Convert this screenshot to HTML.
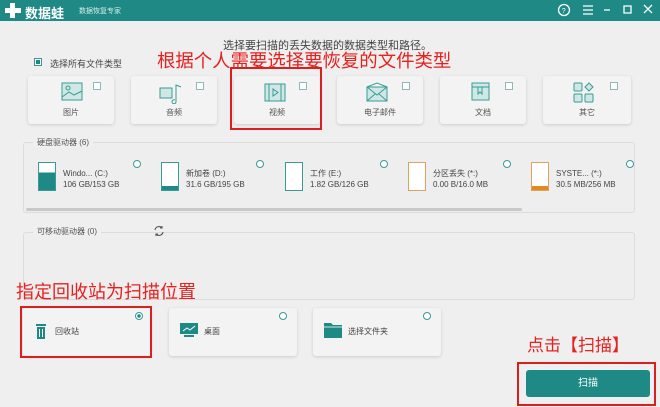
<!DOCTYPE html>
<html><head><meta charset="utf-8"><style>
*{margin:0;padding:0;box-sizing:border-box}
body{width:660px;height:407px;background:#efefef;font-family:"Liberation Sans","Noto Sans CJK SC",sans-serif;position:relative;overflow:hidden;color:#444}
.a{position:absolute}
.bar{left:0;top:0;width:660px;height:21px;background:#1f8a85}
.card{position:absolute;background:#f3f3f3;border-radius:3px;box-shadow:0 1px 3px rgba(0,0,0,.15)}
.cb{position:absolute;width:8px;height:8px;border:1px solid #8fb9b6;background:#fff}
.lbl{position:absolute;font-size:8px;color:#555;width:100%;text-align:center}
.red{color:#e8201f;position:absolute;white-space:nowrap}
.rbox{position:absolute;border:2px solid #d9201f}
.grp{position:absolute;border:1px solid #dcdcdc;border-radius:3px;background:#eeeeee}
.gl{position:absolute;font-size:8px;color:#555;background:#efefef;padding:0 4px}
.drv{position:absolute;top:162px}
.di{position:absolute;width:18px;height:29px;border:1px solid #3a9b95;background:#fff}
.dt{position:absolute;left:25px;font-size:8px;color:#444;white-space:nowrap;line-height:11px}
.rd{position:absolute;width:8px;height:8px;border:1px solid #3a9b95;border-radius:50%;background:#fff}
</style></head><body>
<div class="a bar"></div>
<svg class="a" style="left:4px;top:2px" width="18" height="17" viewBox="0 0 18 17"><path d="M6 1h5v5h6v5h-6v5H6v-5H1V6h5z" fill="#fff"/></svg>
<div class="a" style="left:25px;top:3px;color:#fff;font-weight:bold;font-size:13px">数据蛙</div>
<div class="a" style="left:79px;top:6px;color:#d6ecea;font-size:7px">数据恢复专家</div>
<svg class="a" style="left:557px;top:3px" width="98" height="15" viewBox="0 0 98 15" stroke="#fff" fill="none" stroke-width="1.3"><circle cx="7" cy="7" r="5.5"/><text x="4.8" y="9.8" font-size="7" fill="#fff" stroke="none" font-family="Liberation Sans">?</text><path d="M26 3h10M26 7h10M26 11h10M47 7h6M67 3h7v7h-7zM87 2l8 8M95 2l-8 8"/></svg>

<div class="a" style="left:223px;top:37px;font-size:11px;color:#444">选择要扫描的丢失数据的数据类型和路径。</div>
<div class="red" style="left:157px;top:47px;font-size:18.4px">根据个人需要选择要恢复的文件类型</div>
<div class="a" style="left:34px;top:58px;width:8px;height:8px;border:1px solid #3a9b95;background:#fff"><div style="margin:1px;width:4px;height:4px;background:#1f8a85"></div></div>
<div class="a" style="left:50px;top:57px;font-size:9px;color:#444">选择所有文件类型</div>

<div class="card" style="left:28px;top:76px;width:86px;height:48px"><svg class="a" style="left:33px;top:6px" width="22" height="20"><rect x="1" y="1" width="20" height="17" fill="#cfe8e5" stroke="#3a9b95"/><circle cx="7" cy="6" r="2" fill="none" stroke="#3a9b95"/><path d="M1 15l7-5 5 3 8-4" stroke="#3a9b95" fill="none"/></svg><div class="cb" style="left:65px;top:6px"></div><div class="lbl" style="top:31px">图片</div></div>
<div class="card" style="left:131px;top:76px;width:86px;height:48px"><svg class="a" style="left:28px;top:6px" width="24" height="22"><rect x="1" y="6" width="12" height="10" fill="#cfe8e5" stroke="#3a9b95"/><path d="M17 20V3l5 2M17 20a2 2 0 1 1-1-2" stroke="#3a9b95" fill="none"/></svg><div class="cb" style="left:65px;top:6px"></div><div class="lbl" style="top:31px">音频</div></div>
<div class="card" style="left:234px;top:76px;width:86px;height:48px"><svg class="a" style="left:30px;top:7px" width="22" height="20"><rect x="1" y="1" width="20" height="17" fill="#cfe8e5" stroke="#3a9b95"/><path d="M5 1v17M17 1v17M9 6v7l5-3.5z" stroke="#3a9b95" fill="none"/></svg><div class="cb" style="left:65px;top:6px"></div><div class="lbl" style="top:31px">视频</div></div>
<div class="card" style="left:337px;top:76px;width:86px;height:48px"><svg class="a" style="left:29px;top:6px" width="22" height="20"><rect x="1" y="5" width="20" height="14" fill="#cfe8e5" stroke="#3a9b95"/><path d="M1 5l10-4 10 4M1 5l10 8 10-8M1 19l8-7M21 19l-8-7" stroke="#3a9b95" fill="none"/></svg><div class="cb" style="left:65px;top:6px"></div><div class="lbl" style="top:31px">电子邮件</div></div>
<div class="card" style="left:440px;top:76px;width:86px;height:48px"><svg class="a" style="left:31px;top:6px" width="20" height="20"><rect x="1" y="1" width="17" height="17" fill="#cfe8e5" stroke="#3a9b95"/><path d="M1 5h17M7 5v7l2-2 2 2V5" stroke="#3a9b95" fill="none"/></svg><div class="cb" style="left:65px;top:6px"></div><div class="lbl" style="top:31px">文档</div></div>
<div class="card" style="left:543px;top:76px;width:88px;height:48px"><svg class="a" style="left:30px;top:6px" width="22" height="22"><rect x="1" y="1" width="8" height="8" rx="1" fill="#cfe8e5" stroke="#3a9b95"/><rect x="1" y="12" width="8" height="8" rx="1" fill="#cfe8e5" stroke="#3a9b95"/><rect x="12" y="12" width="8" height="8" rx="1" fill="#cfe8e5" stroke="#3a9b95"/><path d="M16 1l4 4-4 4-4-4z" fill="#cfe8e5" stroke="#3a9b95"/></svg><div class="cb" style="left:67px;top:6px"></div><div class="lbl" style="top:31px">其它</div></div>
<div class="rbox" style="left:230px;top:67px;width:92px;height:63px"></div>

<div class="grp" style="left:23px;top:142px;width:612px;height:71px"></div>
<div class="gl" style="left:33px;top:137px">硬盘驱动器 (6)</div>
<div class="drv" style="left:38px"><div class="di" style="background:linear-gradient(#fff 35%,#1f8a85 35%)"></div><div class="dt" style="top:6px">Windo... (C:)<br>106 GB/153 GB</div><div class="rd" style="left:95px;top:-2px"></div></div>
<div class="drv" style="left:161px"><div class="di" style="background:linear-gradient(#fff 85%,#1f8a85 85%)"></div><div class="dt" style="top:6px">新加卷 (D:)<br>31.6 GB/195 GB</div><div class="rd" style="left:95px;top:-2px"></div></div>
<div class="drv" style="left:285px"><div class="di"></div><div class="dt" style="top:6px">工作 (E:)<br>1.82 GB/126 GB</div><div class="rd" style="left:95px;top:-2px"></div></div>
<div class="drv" style="left:408px"><div class="di" style="border-color:#e0a060"></div><div class="dt" style="top:6px">分区丢失 (*:)<br>0.00 B/16.0 MB</div><div class="rd" style="left:95px;top:-2px"></div></div>
<div class="drv" style="left:531px"><div class="di" style="border-color:#e0a060;background:linear-gradient(#fff 85%,#e08a20 85%)"></div><div class="dt" style="top:6px">SYSTE... (*:)<br>30.5 MB/256 MB</div><div class="rd" style="left:95px;top:-2px"></div></div>
<div class="a" style="left:26px;top:208px;width:496px;height:3px;background:#c8c8c8;border-radius:2px"></div>

<div class="grp" style="left:23px;top:232px;width:612px;height:68px"></div>
<div class="gl" style="left:33px;top:226px">可移动驱动器 (0)</div>
<svg class="a" style="left:153px;top:225px" width="12" height="12" viewBox="0 0 12 12" fill="none" stroke="#555" stroke-width="1.1"><path d="M2 5a4 4 0 0 1 7-2M10 7a4 4 0 0 1-7 2M9 1v2H7M3 11V9h2"/></svg>

<div class="red" style="left:16px;top:278px;font-size:18px">指定回收站为扫描位置</div>
<div class="card" style="left:23px;top:308px;width:128px;height:48px"><svg class="a" style="left:12px;top:14px" width="12" height="18"><rect x="1" y="2" width="10" height="2" fill="#1f8a85"/><rect x="2" y="5" width="8" height="12" fill="#1f8a85"/><path d="M4.5 7v8M7.5 7v8" stroke="#fff"/></svg><div class="a" style="left:32px;top:18px;font-size:8px">回收站</div><div class="rd" style="left:112px;top:4px;background:radial-gradient(#1f8a85 40%,#fff 45%)"></div></div>
<div class="card" style="left:169px;top:308px;width:128px;height:48px"><svg class="a" style="left:10px;top:14px" width="20" height="16"><rect x="1" y="1" width="18" height="11" fill="#1f8a85"/><path d="M4 9l4-3 3 2 5-4" stroke="#fff" fill="none"/><rect x="5" y="13" width="10" height="2" fill="#1f8a85"/></svg><div class="a" style="left:35px;top:18px;font-size:8px">桌面</div><div class="rd" style="left:110px;top:4px"></div></div>
<div class="card" style="left:313px;top:308px;width:128px;height:48px"><svg class="a" style="left:10px;top:13px" width="20" height="18"><path d="M1 2h7l2 2h9v13H1z" fill="#1f8a85"/><path d="M1 6h18" stroke="#cfe8e5"/></svg><div class="a" style="left:35px;top:18px;font-size:8px">选择文件夹</div><div class="rd" style="left:110px;top:4px"></div></div>
<div class="rbox" style="left:20px;top:306px;width:132px;height:52px"></div>

<div class="red" style="left:527px;top:331px;font-size:17px">点击【扫描】</div>
<div class="a" style="left:526px;top:370px;width:124px;height:27px;background:#1f8a85;border-radius:3px;color:#fff;font-size:10px;text-align:center;line-height:27px">扫描</div>
<div class="rbox" style="left:517px;top:362px;width:139px;height:44px"></div>
</body></html>
